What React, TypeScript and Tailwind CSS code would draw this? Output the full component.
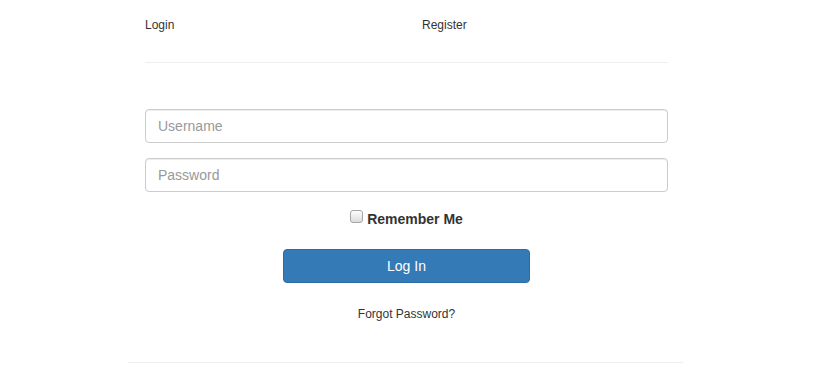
import React from "react";

export default function App() {
  return (
    <div className="w-[830px] h-[385px] bg-white text-[#333] font-['Liberation_Sans',Arial,sans-serif]">
      <div className="ml-[128px] w-[555px] pl-[17px] pr-[15px] border-b border-[#eee] pb-[40px]">
        <div className="h-[63px] border-b border-[#eee] pt-[17px] flex text-[12px] leading-[16px]">
          <div className="w-[277px]">Login</div>
          <div>Register</div>
        </div>
        <div className="mt-[46px] flex flex-col">
          <input
            placeholder="Username"
            className="h-[34px] w-full border border-[#ccc] rounded-[4px] px-[12px] text-[14px] placeholder:text-[#999] shadow-[inset_0_1px_1px_rgba(0,0,0,0.075)] outline-none"
          />
          <input
            placeholder="Password"
            type="password"
            className="mt-[15px] h-[34px] w-full border border-[#ccc] rounded-[4px] px-[12px] text-[14px] placeholder:text-[#999] shadow-[inset_0_1px_1px_rgba(0,0,0,0.075)] outline-none"
          />
          <div className="mt-[17px] flex justify-center items-center h-[20px]">
            <span className="w-[13px] h-[13px] -mt-[5px] mr-[4px] border border-[#a5a5a5] rounded-[3px] bg-gradient-to-b from-[#fdfdfd] to-[#dcdcdc]" />
            <span className="text-[14px] leading-[20px] font-bold">Remember Me</span>
          </div>
          <div className="mt-[20px] flex justify-center">
            <button className="w-[247px] h-[34px] bg-[#337ab7] border border-[#2e6da4] rounded-[4px] text-white text-[14px] leading-[20px]">
              Log In
            </button>
          </div>
          <div className="mt-[23px] text-center text-[12px] leading-[16px]">Forgot Password?</div>
        </div>
      </div>
    </div>
  );
}
